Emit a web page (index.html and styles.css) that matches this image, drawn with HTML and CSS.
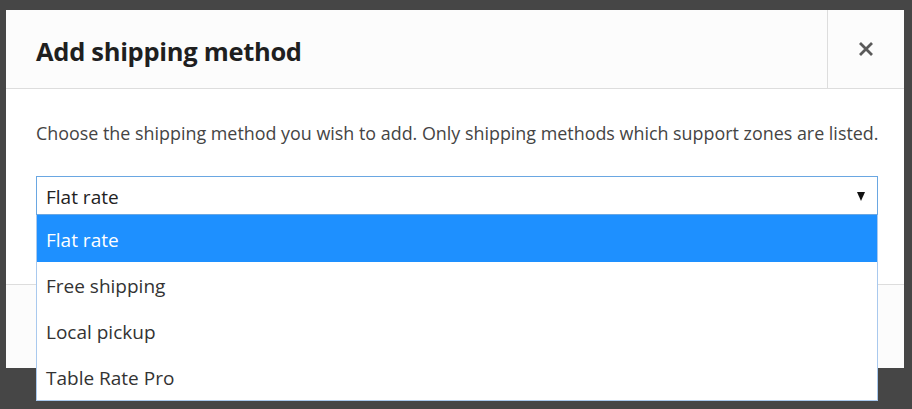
FILE: index.html
```html
<!DOCTYPE html>
<html>
<head>
<meta charset="utf-8">
<link rel="stylesheet" href="styles.css">
</head>
<body>
<div class="modal">
  <header class="modal-header">
    <h1 class="modal-title">Add shipping method</h1>
    <button class="modal-close" aria-label="Close">
      <svg width="16" height="16" viewBox="0 0 16 16"><path d="M2 2 L14 14 M14 2 L2 14" stroke="#5a5a5a" stroke-width="2.8" stroke-linecap="butt"/></svg>
    </button>
  </header>
  <section class="modal-body">
    <p class="modal-desc">Choose the shipping method you wish to add. Only shipping methods which support zones are listed.</p>
    <div class="select">
      <span class="select-value">Flat rate</span>
      <span class="select-arrow"></span>
    </div>
  </section>
  <footer class="modal-footer"></footer>
</div>
<ul class="dropdown">
  <li class="option selected">Flat rate</li>
  <li class="option">Free shipping</li>
  <li class="option">Local pickup</li>
  <li class="option">Table Rate Pro</li>
</ul>
</body>
</html>
```
FILE: styles.css
```css
html, body {
  margin: 0;
  padding: 0;
}
body {
  background: #464646;
  width: 912px;
  height: 409px;
  overflow: hidden;
  font-family: "Open Sans", "Noto Sans", sans-serif;
  position: relative;
}
.modal {
  margin: 10px 0 0 6px;
  width: 898px;
  height: 358px;
  background: #fff;
  display: flex;
  flex-direction: column;
}
.modal-header {
  height: 78px;
  background: #fcfcfc;
  border-bottom: 1px solid #dddddd;
  display: flex;
  align-items: stretch;
}
.modal-title {
  flex: 1;
  margin: 0;
  padding: 3px 0 0 30px;
  display: flex;
  align-items: center;
  font-size: 25.5px;
  font-weight: 700;
  color: #1f1f1f;
  letter-spacing: -0.3px;
}
.modal-close {
  width: 77px;
  border: 0;
  border-left: 1px solid #dddddd;
  background: #fcfcfc;
  padding: 0;
  display: flex;
  align-items: center;
  justify-content: center;
}
.modal-body {
  height: 195px;
  padding: 0 26px 0 30px;
}
.modal-desc {
  margin: 31px 0 0;
  font-size: 17.9px;
  line-height: 26px;
  color: #444;
  white-space: nowrap;
}
.select {
  margin-top: 30px;
  height: 35px;
  border: 1px solid #6aa7e2;
  display: flex;
  align-items: center;
  padding: 2px 10px 0 9px;
  box-sizing: content-box;
}
.select-value {
  flex: 1;
  font-size: 19px;
  color: #222;
}
.select-arrow {
  width: 0;
  height: 0;
  border-left: 4px solid transparent;
  border-right: 4px solid transparent;
  border-top: 9px solid #111;
  margin-right: 2px;
}
.modal-footer {
  flex: 1;
  background: #fcfcfc;
  border-top: 1px solid #dddddd;
}
.dropdown {
  position: absolute;
  left: 36px;
  top: 215px;
  width: 840px;
  margin: 0;
  padding: 0;
  list-style: none;
  background: #fff;
  border: 1px solid #a9c9ee;
  border-top: 0;
}
.option {
  height: 46px;
  padding: 2px 0 0 9px;
  box-sizing: border-box;
  display: flex;
  align-items: center;
  font-size: 19px;
  color: #333;
}
.option.selected {
  height: 47px;
  background: #1e90ff;
  color: #fff;
}
```
